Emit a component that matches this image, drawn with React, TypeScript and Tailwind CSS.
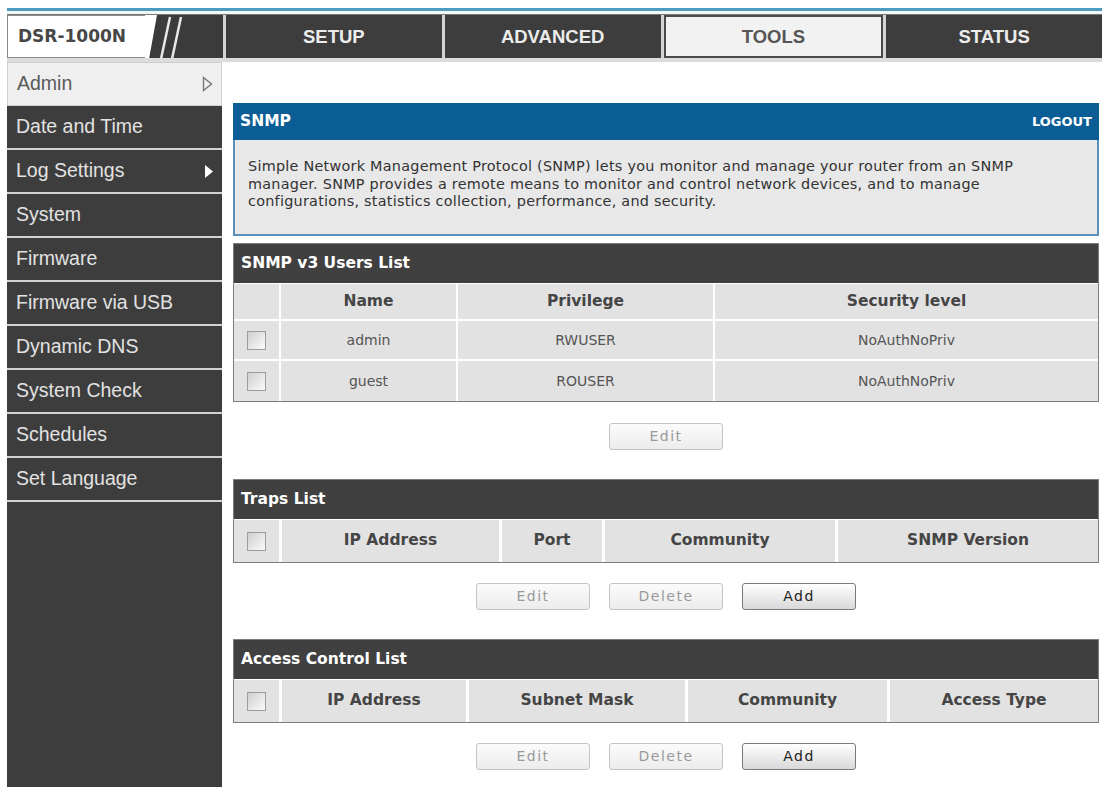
import React from "react";

const menu = [
  "Date and Time",
  "Log Settings",
  "System",
  "Firmware",
  "Firmware via USB",
  "Dynamic DNS",
  "System Check",
  "Schedules",
  "Set Language",
];

function Checkbox() {
  return (
    <span className="block w-[19px] h-[19px] border border-[#9c9c9c] bg-linear-to-br from-[#cfcfcf] to-[#fbfbfb]" />
  );
}

function Btn({ label, active = false }: { label: string; active?: boolean }) {
  return (
    <button
      className={
        "w-[114px] h-[27px] rounded-[3px] border text-[14px] tracking-[1.5px] font-['DejaVu_Sans',sans-serif] bg-linear-to-b " +
        (active
          ? "border-[#7a7a7a] text-[#222] from-[#ffffff] to-[#d9d9d9]"
          : "border-[#c4c4c4] text-[#9a9a9a] from-[#fbfbfb] to-[#ececec]")
      }
    >
      {label}
    </button>
  );
}

function Title({ text }: { text: string }) {
  return (
    <div className="h-[39px] bg-[#404040] text-white font-bold text-[15.5px] px-[7px] flex items-center">
      {text}
    </div>
  );
}

function Cell({
  children,
  bold = false,
}: {
  children?: React.ReactNode;
  bold?: boolean;
}) {
  return (
    <div
      className={
        "bg-[#e2e2e2] flex items-center justify-center " +
        (bold ? "font-bold text-[#454545] text-[15.5px]" : "text-[#555] text-[14px]")
      }
    >
      {children}
    </div>
  );
}

export default function App() {
  return (
    <div className="min-h-screen bg-white flex flex-col px-[7px] pt-[8px] font-['DejaVu_Sans',sans-serif]">
      {/* accent rule */}
      <div className="h-[3px] w-[1095px] bg-[#4d9cbf]" />
      <div className="h-[3px] w-[1095px] bg-[#f4f7f8]" />

      {/* top bar: logo + tabs */}
      <div className="flex w-[1095px] h-[44px] gap-[3px] bg-[#d4d4d4] border-t border-[#777]">
        <div className="w-[216px] flex bg-[#3b3b3b]">
          <div className="w-[138px] bg-white border-l border-t border-b border-[#8a8a8a] flex items-center pl-[10px] text-[17px] font-bold text-[#474747]">
            DSR-1000N
          </div>
          <svg width="78" height="44" viewBox="0 0 78 44" className="block">
            <polygon points="0,0 12,0 4,44 0,44" fill="#ffffff" />
            <line x1="25" y1="2" x2="16" y2="44" stroke="#e8e8e8" strokeWidth="2.5" />
            <line x1="36" y1="2" x2="27" y2="44" stroke="#e8e8e8" strokeWidth="2.5" />
          </svg>
        </div>
        {["SETUP", "ADVANCED", "TOOLS", "STATUS"].map((t) => (
          <div
            key={t}
            className={
              "flex-1 flex items-center justify-center font-bold text-[18.5px] font-['Liberation_Sans',Arial,sans-serif] " +
              (t === "TOOLS"
                ? "bg-[#f2f2f2] text-[#555] border-2 border-[#4a4a4a]"
                : "bg-[#3d3d3d] text-[#ececec]")
            }
          >
            {t}
          </div>
        ))}
      </div>
      <div className="h-[4px] w-[1095px] bg-[#dcdcdc]" />

      <div className="flex flex-1">
        {/* side menu */}
        <div className="w-[215px] bg-[#3d3d3d] flex flex-col font-['Liberation_Sans',Arial,sans-serif] text-[19.5px]">
          <div className="h-[44px] bg-[#efefef] border border-[#cfcfcf] flex items-center justify-between pl-[9px] pr-[8px] text-[#5a5a5a]">
            <span>Admin</span>
            <svg width="11" height="16" viewBox="0 0 11 16">
              <polygon points="1.5,1.5 9.5,8 1.5,14.5" fill="none" stroke="#777" strokeWidth="1.4" />
            </svg>
          </div>
          {menu.map((m) => (
            <div
              key={m}
              className="h-[44px] border-b-2 border-[#d2d2d2] flex items-center justify-between pl-[9px] pr-[9px] text-[#e2e2e2]"
            >
              <span>{m}</span>
              {m === "Log Settings" && (
                <svg width="8" height="13" viewBox="0 0 8 13">
                  <polygon points="0,0 8,6.5 0,13" fill="#ffffff" />
                </svg>
              )}
            </div>
          ))}
        </div>

        {/* content */}
        <div className="ml-[11px] w-[866px] pt-[41px] pb-[16px] flex flex-col items-stretch">
          <div className="h-[37px] bg-[#0b5d95] flex items-center justify-between px-[7px] text-white font-bold">
            <span className="text-[15.5px]">SNMP</span>
            <span className="text-[13px]">LOGOUT</span>
          </div>
          <div className="h-[96px] bg-[#e8e8e8] border-2 border-t-0 border-[#5b8fbd] px-[13px] pt-[18px] text-[14.4px] leading-[17.5px] text-[#333] tracking-[0.25px]">
            Simple Network Management Protocol (SNMP) lets you monitor and manage your router from an SNMP
            <br />
            manager. SNMP provides a remote means to monitor and control network devices, and to manage
            <br />
            configurations, statistics collection, performance, and security.
          </div>

          {/* SNMP v3 users */}
          <div className="mt-[7px] border border-[#7d7d7d]">
            <Title text="SNMP v3 Users List" />
            <div className="grid grid-cols-[45px_175px_255px_1fr] grid-rows-[35px_38px_40px] gap-[2px] bg-white pt-[1px]">
              <Cell />
              <Cell bold>Name</Cell>
              <Cell bold>Privilege</Cell>
              <Cell bold>Security level</Cell>
              {[
                ["admin", "RWUSER"],
                ["guest", "ROUSER"],
              ].map(([n, p]) => (
                <React.Fragment key={n}>
                  <Cell>
                    <Checkbox />
                  </Cell>
                  <Cell>{n}</Cell>
                  <Cell>{p}</Cell>
                  <Cell>NoAuthNoPriv</Cell>
                </React.Fragment>
              ))}
            </div>
          </div>
          <div className="mt-[21px] flex justify-center">
            <Btn label="Edit" />
          </div>

          {/* traps */}
          <div className="mt-[29px] border border-[#7d7d7d]">
            <Title text="Traps List" />
            <div className="grid grid-cols-[45px_217px_100px_230px_1fr] auto-rows-[42px] gap-[3px] bg-white pt-[1px]">
              <Cell>
                <Checkbox />
              </Cell>
              <Cell bold>IP Address</Cell>
              <Cell bold>Port</Cell>
              <Cell bold>Community</Cell>
              <Cell bold>SNMP Version</Cell>
            </div>
          </div>
          <div className="mt-[20px] flex justify-center gap-[19px]">
            <Btn label="Edit" />
            <Btn label="Delete" />
            <Btn label="Add" active />
          </div>

          {/* access control */}
          <div className="mt-[29px] border border-[#7d7d7d]">
            <Title text="Access Control List" />
            <div className="grid grid-cols-[45px_184px_216px_199px_1fr] auto-rows-[42px] gap-[3px] bg-white pt-[1px]">
              <Cell>
                <Checkbox />
              </Cell>
              <Cell bold>IP Address</Cell>
              <Cell bold>Subnet Mask</Cell>
              <Cell bold>Community</Cell>
              <Cell bold>Access Type</Cell>
            </div>
          </div>
          <div className="mt-[20px] flex justify-center gap-[19px]">
            <Btn label="Edit" />
            <Btn label="Delete" />
            <Btn label="Add" active />
          </div>
        </div>
      </div>
    </div>
  );
}
